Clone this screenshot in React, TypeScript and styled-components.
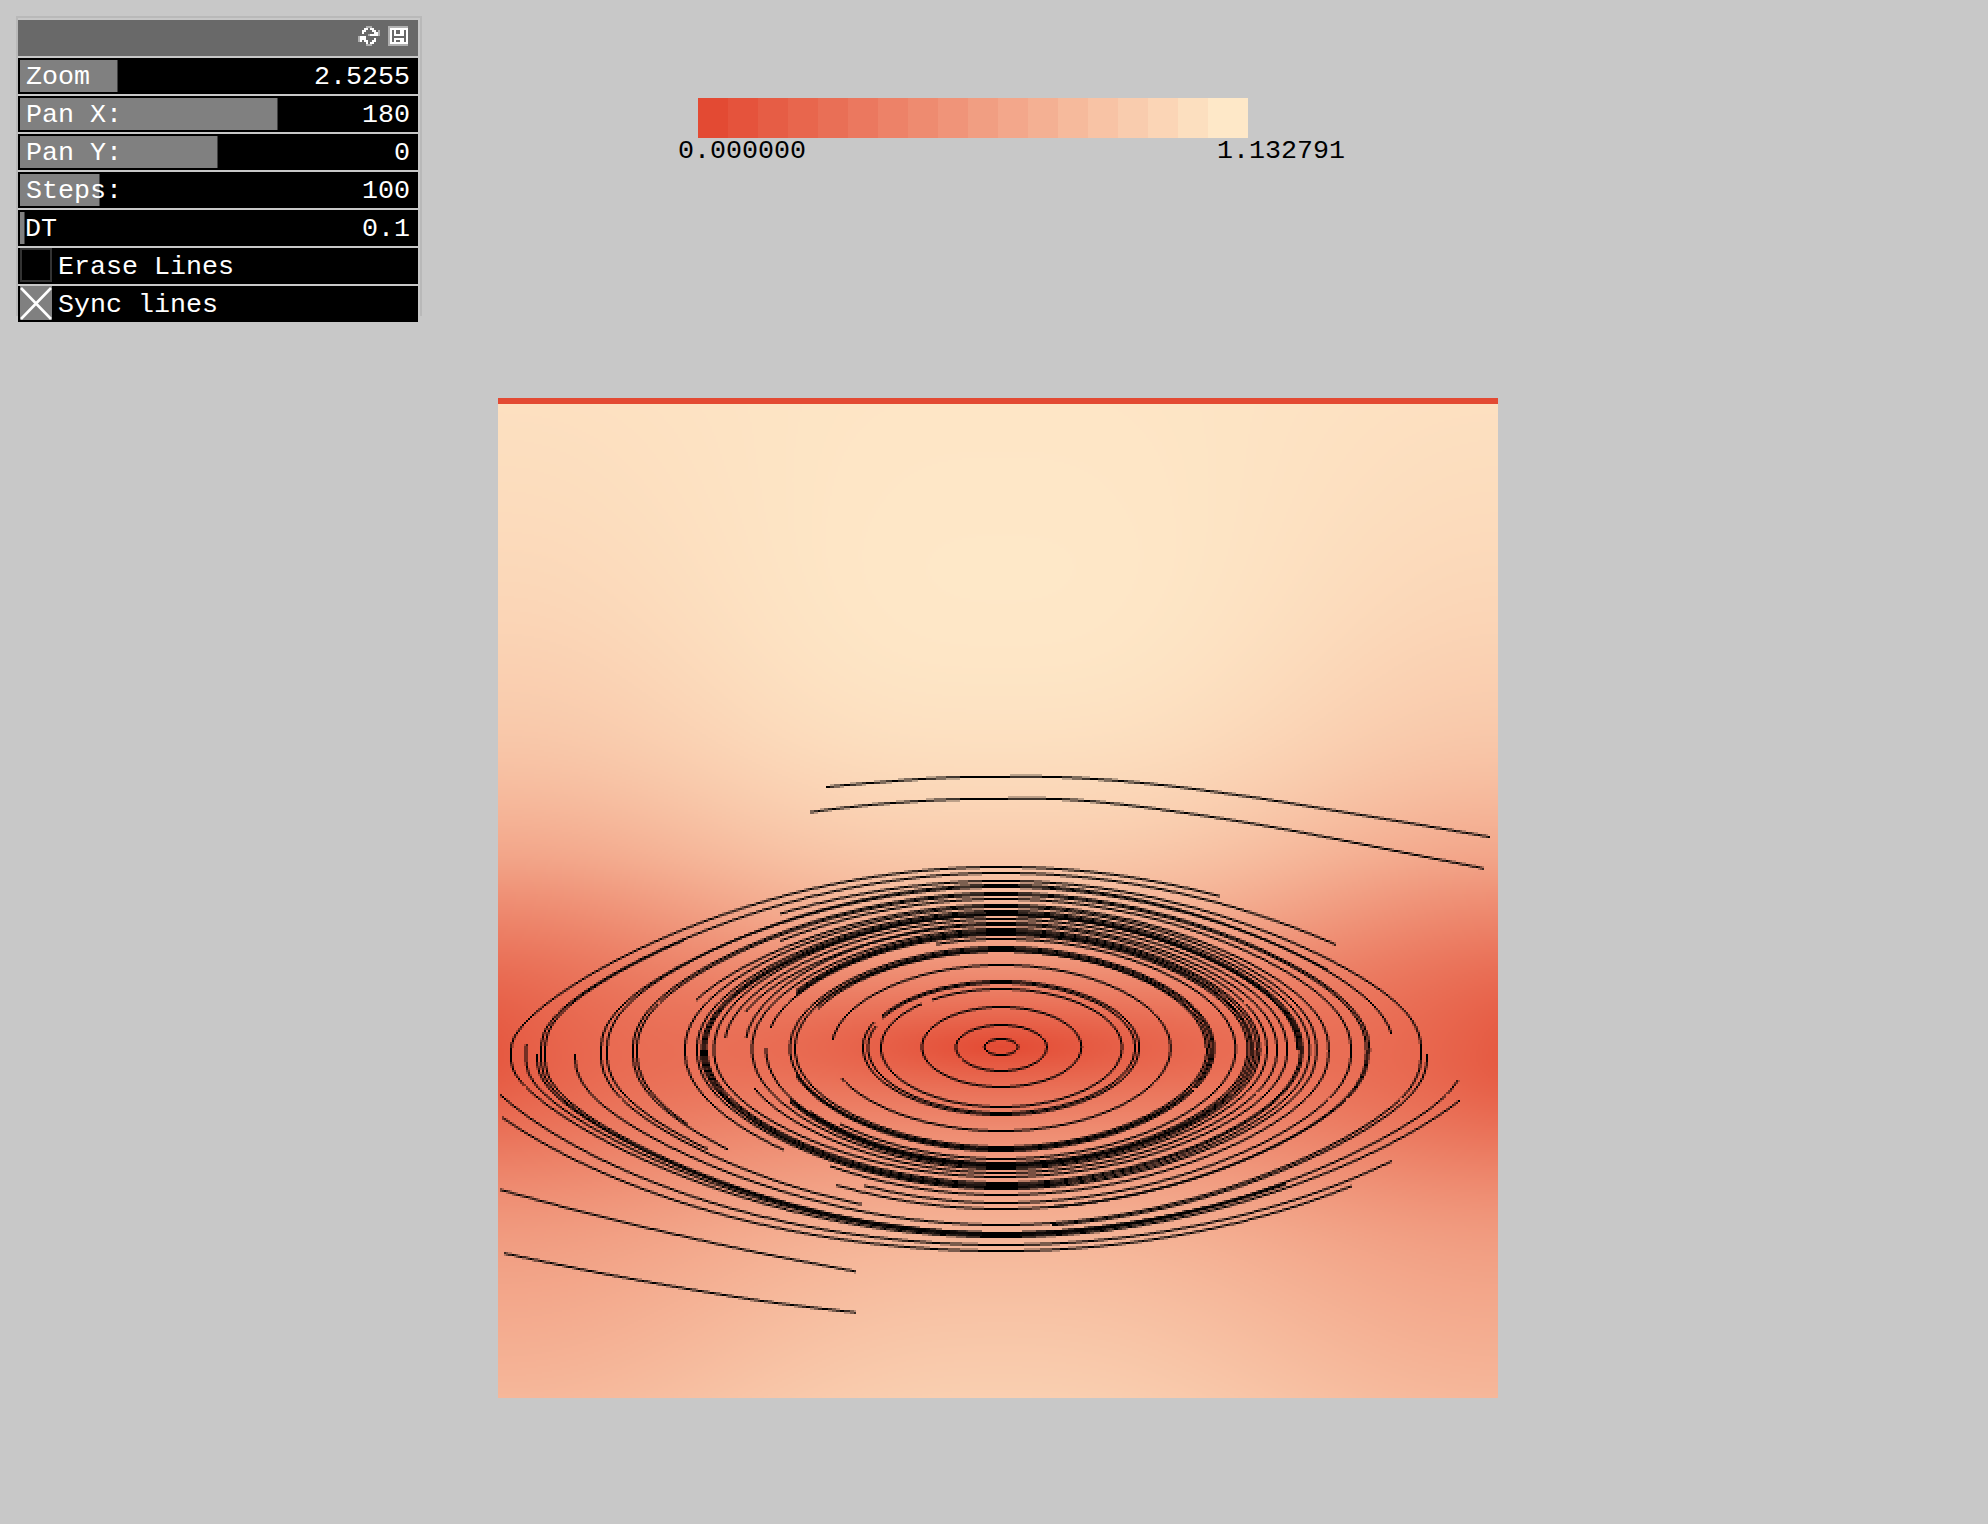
import React, { useLayoutEffect, useRef } from "react";
import styled, { createGlobalStyle } from "styled-components";

const Global = createGlobalStyle`
  * { box-sizing: border-box; }
  html, body { margin: 0; background: #c8c8c8; }
`;

const Screen = styled.main`
  width: 1988px;
  height: 1524px;
  overflow: hidden;
  background: #c8c8c8;
  display: grid;
  grid-template-columns: 498px 1000px 1fr;
  grid-template-rows: 398px 1000px 1fr;
  font-family: "Liberation Mono", "DejaVu Sans Mono", monospace;
  font-size: 26.66px;
  line-height: 30px;
  color: #000;
`;

const Panel = styled.section`
  grid-area: 1 / 1;
  margin: 16px 0 0 16px;
  width: 406px;
  height: 300px;
  border: 2px solid #b9b9b9;
  border-bottom: 0;
  padding: 2px 0 0;
`;

const PanelHeader = styled.header`
  width: 400px;
  height: 36px;
  background: #696969;
  display: flex;
  justify-content: flex-end;
  gap: 8px;
  padding: 6px 10px 0 0;
`;

const Rows = styled.div`
  display: flex;
  flex-direction: column;
  gap: 2px;
  margin-top: 2px;
`;

const Row = styled.div<{ $fill?: number; $indent?: number }>`
  width: 400px;
  height: 36px;
  background-color: #000;
  background-image: linear-gradient(#808080, #808080), linear-gradient(#404040, #404040);
  background-repeat: no-repeat;
  background-position: 2px 2px;
  background-size: ${(p) => p.$fill ?? 0}px 32px, ${(p) => (p.$fill ? p.$fill + 1 : 0)}px 32px;
  color: #fff;
  display: flex;
  justify-content: space-between;
  padding: 4px 8px 2px ${(p) => p.$indent ?? 8}px;
  white-space: pre;
`;

const ToggleRow = styled(Row)`
  justify-content: flex-start;
  gap: 6px;
  padding: 0 2px;
  line-height: 38px;
`;

const Check = styled.span<{ $on?: boolean }>`
  width: 32px;
  height: 34px;
  display: block;
  background: ${(p) => (p.$on ? "#808080" : "#000")};
  border: ${(p) => (p.$on ? "0" : "2px solid #333")};
  svg { display: block; }
`;

const Legend = styled.section`
  grid-area: 1 / 2;
  margin: 98px 0 0 180px;
  width: 667px;
`;

const Ramp = styled.div`
  display: flex;
  margin-left: 20px;
  width: 550px;
  height: 40px;
`;

const Swatch = styled.span<{ $color: string }>`
  flex: 0 0 30px;
  background: ${(p) => p.$color};
  &:last-child { flex-basis: 40px; }
`;

const Range = styled.div`
  display: flex;
  justify-content: space-between;
  line-height: 26px;
`;

const Plot = styled.canvas`
  grid-area: 2 / 2;
  width: 1000px;
  height: 1000px;
  image-rendering: pixelated;
`;

const LOW = [227, 74, 51];
const HIGH = [254, 232, 200];
const mix = (t: number) => LOW.map((c, i) => Math.round(c + (HIGH[i] - c) * t));

/* Field space is 1000 units square; the vortex sits at (503, 649). */
const CX = 503;
const CY = 649;

type Table = [number, number][];

const CENTER: Table = [
  [0, 0.985], [90, 0.993], [177, 0.998], [250, 0.99], [302, 0.97], [349, 0.94], [414, 0.87],
  [468, 0.78], [519, 0.65], [572, 0.43], [615, 0.2], [649, 0], [675, 0.15], [702, 0.29],
  [749, 0.47], [830, 0.66], [899, 0.75], [1000, 0.84],
];
const EDGE: Table = [
  [0, 0.95], [132, 0.915], [252, 0.86], [362, 0.765], [452, 0.59], [502, 0.43], [562, 0.24],
  [610, 0.11], [658, 0], [690, 0.1], [722, 0.2], [792, 0.41], [852, 0.53], [1000, 0.69],
];

/* Cubic lookup keeps the colour bands smooth between table entries. */
function sample(t: Table, y: number) {
  let i = 0;
  while (i < t.length - 2 && y > t[i + 1][0]) i++;
  const h = t[i + 1][0] - t[i][0];
  const tangent = (a: number) => {
    if (t[a][1] === 0) return (t[i + 1][1] - t[i][1]) / h;
    const lo = Math.max(0, a - 1);
    const hi = Math.min(t.length - 1, a + 1);
    return (t[hi][1] - t[lo][1]) / (t[hi][0] - t[lo][0]);
  };
  const s = (y - t[i][0]) / h;
  const s2 = s * s;
  const s3 = s2 * s;
  return (2 * s3 - 3 * s2 + 1) * t[i][1] + (s3 - 2 * s2 + s) * h * tangent(i)
    + (3 * s2 - 2 * s3) * t[i + 1][1] + (s3 - s2) * h * tangent(i + 1);
}

/* [apex y, left radius, right radius, start x, end x], x relative to the vortex. */
type Arc = [number, number, number, number?, number?];

const UPPER: Arc[] = [
  [867, 490, 493, -490, 215], [872.7, 460, 464, -460, 331], [881, 440, 414, -220],
  [885.7, 394, 387, -394, 385], [887, 400, 392, -400, 322], [893, 368, 363], [895, 364, 360],
  [899, 350, 345, -220], [873.5, 456, 461, -456, -317],
  [905, 330, 323, -306], [907, 316, 311], [910, 304, 304], [912.5, 299, 297], [914, 297, 295],
  [915.5, 295, 293], [914.5, 287, 292], [918, 277, 282, -276], [922, 256, 272, -255],
  [924, 270, 262, -255], [928, 249, 255], [931, 240, 252, -204], [933, 235, 246, -204],
  [934.5, 235, 243, -231], [932, 238, 248, -204], [939, 228, 231, -64],
  [947, 211, 210], [948.5, 206, 208], [950, 208, 205, -184], [951, 202, 202, -184],
  [965, 169, 167, -168], [981, 136, 136, -118], [982.5, 134, 132, -118],
  [981, 138, 136, -138, -127], [982.5, 133, 132, -133, -125],
  [989, 120, 119, -68], [989, 120, 119, -120, -79],
  [1007, 79, 79], [1025, 45, 45], [1038.5, 16.5, 16.5],
  [870, 475, 470, -475, -474.5],
];

const LOWER: Arc[] = [
  [1251, 559, 528, -498, 346], [1244.5, 532, 517, -500, 385], [1236.5, 490, 481, -490, 452],
  [1234.5, 475, 456, -475, 450], [1233, 464, 468, -464, 281], [1235.5, 460, 468, -460, 281],
  [1232, 456, 468, -456, 200], [1224.5, 426, 414], [1226, 426, 420, 50],
  [1219, 400, 400, -400, -139], [1215, 394, 394, -394, -293], [1212, 368, 368, -368, -272],
  [1213, 364, 364, -364, -312], [1209, 350, 362, -164], [1208, 350, 360, 50],
  [1203, 330, 345, -136], [1195, 310, 323, -170], [1196, 316, 316, -316, -216],
  [1189, 304, 311], [1187, 298, 304], [1185, 296, 297], [1182, 294, 295], [1187.5, 300, 293, -300, 60],
  [1177, 287, 282], [1172.7, 262, 272, -247], [1169, 249, 262], [1167, 240, 255, -211],
  [1165.5, 238, 252, -211], [1164, 235, 246], [1165, 237, 249, -211], [1163, 234, 243, -190],
  [1158.7, 228, 231, -160], [1150.5, 213, 210, -204], [1148.5, 211, 208], [1146.5, 206, 203],
  [1149.5, 212, 206, -204], [1130.7, 172, 167, -159], [1114.7, 138, 136], [1113, 133, 132],
  [1107, 120, 119], [1087, 79, 79], [1070.7, 45, 45], [1055.7, 16.5, 16.5],
];

const OPEN: number[][] = [
  [827, 787, 870, 783, 940, 778, 1001, 776.8, 1068, 777.5, 1152, 784, 1244, 796, 1325, 809, 1406, 822.5, 1490, 837],
  [811, 812, 870, 805, 940, 800, 1001, 798.8, 1066, 799.5, 1142, 807, 1234, 820.5, 1315, 835, 1406, 853, 1484, 868.5],
  [501, 1190, 600, 1216.5, 700, 1240, 770, 1255, 856, 1271.5],
  [505, 1253.5, 600, 1273, 700, 1291, 780, 1303.5, 856, 1312.5],
];

type Point = [number, number];

const east = (x: number) => (x > 0 ? x * 1.0141 + 0.2 : x);

function arcPoints(arc: Arc): Point[] {
  const [apexRaw, left, rightRaw, fromRaw = -arc[1], toRaw = arc[2]] = arc;
  const apex = Math.round((apexRaw - 399) / 2) * 2 + 399;
  const right = east(rightRaw);
  const from = east(fromRaw);
  const to = east(toRaw);
  const turn = (x: number) => Math.acos(Math.max(-1, Math.min(1, x / (x < 0 ? left : right))));
  const a0 = turn(from);
  const a1 = turn(to);
  const pts: Point[] = [];
  for (let i = 0; i <= 240; i++) {
    const c = Math.cos(a0 + ((a1 - a0) * i) / 240);
    const r = c < 0 ? left : right;
    const near = Math.min(r, 490) / 490;
    const mid = 1047 + 8 * near * near;
    let rise: number;
    if (r > 501) {
      rise = Math.pow(Math.max(0, 1 - c * c), 0.72);
    } else {
      const floor = Math.cos((Math.PI * r) / 500);
      const q = 0.5 - 0.17 * Math.pow(near, 3.4);
      rise = Math.pow(Math.max(0, (Math.cos((Math.PI * r * c) / 500) - floor) / (1 - floor)), q);
    }
    pts.push([CX + c * r, mid + (apex - mid) * rise - 398]);
  }
  return pts;
}

function openPoints(flat: number[]): Point[] {
  const n = flat.length / 2;
  const at = (i: number): Point => {
    const k = Math.max(0, Math.min(n - 1, i));
    return [flat[2 * k] - 498, flat[2 * k + 1] - 398];
  };
  const pts: Point[] = [];
  for (let i = 0; i < n - 1; i++) {
    const p = [at(i - 1), at(i), at(i + 1), at(i + 2)];
    for (let j = 0; j <= 12; j++) {
      const t = j / 12;
      const axis = (d: 0 | 1) =>
        0.5 * (2 * p[1][d] + (p[2][d] - p[0][d]) * t
          + (2 * p[0][d] - 5 * p[1][d] + 4 * p[2][d] - p[3][d]) * t * t
          + (3 * p[1][d] - p[0][d] - 3 * p[2][d] + p[3][d]) * t * t * t);
      pts.push([axis(0), axis(1)]);
    }
  }
  return pts;
}

/* One-pixel line with four coverage levels, swept along the major axis. */
function stroke(data: Uint8ClampedArray, pts: Point[]) {
  const cover = new Map<number, number>();
  const put = (x: number, y: number, c: number) => {
    if (x < 0 || y < 0 || x > 499 || y > 499 || c <= 0) return;
    const k = y * 500 + x;
    cover.set(k, Math.max(cover.get(k) ?? 0, c));
  };
  for (let i = 1; i < pts.length; i++) {
    const [ax, ay] = [pts[i - 1][0] / 2, pts[i - 1][1] / 2];
    const [bx, by] = [pts[i][0] / 2, pts[i][1] / 2];
    const flat = Math.abs(bx - ax) >= Math.abs(by - ay);
    const [m0, n0, m1, n1] = flat ? [ax, ay, bx, by] : [ay, ax, by, bx];
    const lo = Math.ceil(Math.min(m0, m1) - 0.5);
    const hi = Math.ceil(Math.max(m0, m1) - 0.5);
    for (let m = lo; m < hi; m++) {
      const n = n0 + ((n1 - n0) * (m + 0.5 - m0)) / (m1 - m0) - 0.5;
      const base = Math.floor(n);
      const part = Math.round((n - base) * 4) / 4;
      if (flat) {
        put(m, base, 1 - part);
        put(m, base + 1, part);
      } else {
        put(base, m, 1 - part);
        put(base + 1, m, part);
      }
    }
  }
  cover.forEach((c, k) => {
    for (let d = 0; d < 3; d++) data[k * 4 + d] *= 1 - c;
  });
}

function paint(ctx: CanvasRenderingContext2D) {
  const image = ctx.createImageData(500, 500);
  for (let row = 0; row < 500; row++) {
    const y = row * 2 + 1;
    const uc = sample(CENTER, y);
    const ue = sample(EDGE, y);
    const decay = 1 / (1 + ((y - CY) / 180) ** 2);
    for (let col = 0; col < 500; col++) {
      const phase = (Math.PI * (col * 2 + 1 - CX)) / 500;
      const w = (1 - Math.cos(phase)) / 2;
      const u = uc + (ue - uc) * Math.pow(w, y < CY ? 1.45 : 1.2);
      const v = (0.2 * Math.abs(Math.sin(phase)) + 0.1 * w * w) * decay;
      const rgb = row < 3 ? LOW : mix(Math.max(0, Math.min(1, Math.hypot(u, v))));
      const k = (row * 500 + col) * 4;
      image.data[k] = rgb[0];
      image.data[k + 1] = rgb[1];
      image.data[k + 2] = rgb[2];
      image.data[k + 3] = 255;
    }
  }
  [...UPPER, ...LOWER].forEach((a) => stroke(image.data, arcPoints(a)));
  OPEN.forEach((p) => stroke(image.data, openPoints(p)));
  ctx.putImageData(image, 0, 0);
}

function FieldPlot() {
  const ref = useRef<HTMLCanvasElement>(null);
  useLayoutEffect(() => {
    const ctx = ref.current?.getContext("2d");
    if (ctx) paint(ctx);
  }, []);
  return <Plot ref={ref} width={500} height={500} />;
}

/* "#" is a lit pixel, "+" a half-lit one. */
function PixelIcon({ rows }: { rows: string[] }) {
  const w = rows[0].length;
  return (
    <svg width={w * 2} height={rows.length * 2} viewBox={`0 0 ${w} ${rows.length}`} shapeRendering="crispEdges">
      {rows.flatMap((r, y) =>
        [...r].map((c, x) =>
          c === "." ? null : <rect key={`${x}-${y}`} x={x} y={y} width="1" height="1" fill={c === "#" ? "#fff" : "#b0b0b0"} />,
        ),
      )}
    </svg>
  );
}

const REFRESH = [
  "....+++....",
  "...##.##...",
  "..##...##.+",
  "..#.....##+",
  ".....+####+",
  "+###.......",
  "+###....#..",
  "+#.##..##..",
  "....#.##...",
  "....+++....",
];

const SAVE = [
  "++++++++++",
  "+#########",
  "+#.#..##.#",
  "+#.#..##.#",
  "+#.#####.#",
  "+#.......#",
  "+#.#####.#",
  "+#.#..##.#",
  "+#########",
  "++++++++++",
];

const SLIDERS = [
  { label: "Zoom", value: "2.5255", fill: 97 },
  { label: "Pan X:", value: "180", fill: 257 },
  { label: "Pan Y:", value: "0", fill: 197 },
  { label: "Steps:", value: "100", fill: 79 },
  { label: "DT", value: "0.1", fill: 4, indent: 7 },
];

export default function App() {
  return (
    <>
      <Global />
      <Screen>
        <Panel>
          <PanelHeader>
            <PixelIcon rows={REFRESH} />
            <PixelIcon rows={SAVE} />
          </PanelHeader>
          <Rows>
            {SLIDERS.map((s) => (
              <Row key={s.label} $fill={s.fill} $indent={s.indent}>
                <span>{s.label}</span>
                <span>{s.value}</span>
              </Row>
            ))}
            <ToggleRow>
              <Check />
              <span>Erase Lines</span>
            </ToggleRow>
            <ToggleRow>
              <Check $on>
                <svg width="32" height="34" viewBox="0 0 32 34" stroke="#fff" strokeWidth="2.6">
                  <path d="M1 2 31 33M31 2 1 33" />
                </svg>
              </Check>
              <span>Sync lines</span>
            </ToggleRow>
          </Rows>
        </Panel>
        <Legend>
          <Ramp>
            {Array.from({ length: 18 }, (_, i) => (
              <Swatch key={i} $color={`rgb(${mix(i / 17).join(",")})`} />
            ))}
          </Ramp>
          <Range>
            <span>0.000000</span>
            <span>1.132791</span>
          </Range>
        </Legend>
        <FieldPlot />
      </Screen>
    </>
  );
}
